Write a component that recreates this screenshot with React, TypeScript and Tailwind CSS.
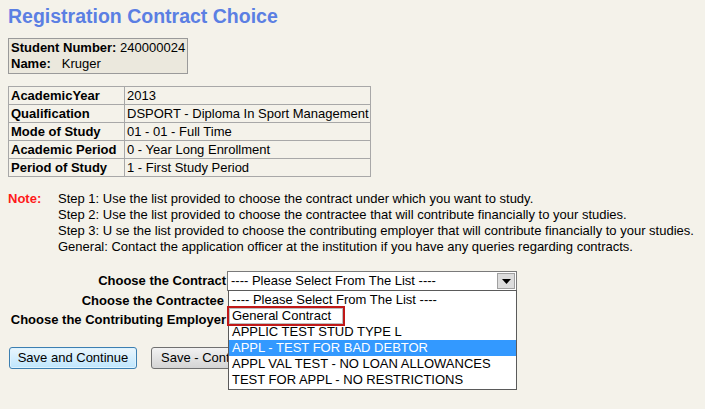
const rows = [
  ["AcademicYear", "2013"],
  ["Qualification", "DSPORT - Diploma In Sport Management"],
  ["Mode of Study", "01 - 01 - Full Time"],
  ["Academic Period", "0 - Year Long Enrollment"],
  ["Period of Study", "1 - First Study Period"],
];

const steps = [
  "Step 1: Use the list provided to choose the contract under which you want to study.",
  "Step 2: Use the list provided to choose the contractee that will contribute financially to your studies.",
  "Step 3: U se the list provided to choose the contributing employer that will contribute financially to your studies.",
  "General: Contact the application officer at the institution if you have any queries regarding contracts.",
];

const options = [
  "---- Please Select From The List ----",
  "General Contract",
  "APPLIC TEST STUD TYPE L",
  "APPL - TEST FOR BAD DEBTOR",
  "APPL VAL TEST - NO LOAN ALLOWANCES",
  "TEST FOR APPL - NO RESTRICTIONS",
];

const SelectBox = ({ open }: { open?: boolean }) => {
  return (
    <div className="relative w-[290px] h-[20px] border border-[#7a7a7a] bg-white flex items-center">
      <span className="pl-[3px] leading-[16px]">---- Please Select From The List ----</span>
      <div className="absolute right-px top-px w-[18px] h-[16px] bg-[#dcdcdc] border border-[#a0a0a0] flex items-center justify-center">
        <svg width="9" height="5" viewBox="0 0 9 5">
          <path d="M0 0 H9 L4.5 5 Z" fill="#000" />
        </svg>
      </div>

      {open && (
        <div className="absolute left-0 top-[18px] w-[289px] border border-[#5a5a5a] bg-white py-px z-10">
          {options.map((opt, i) => (
            <div
              key={opt}
              className={
                i === 3
                  ? "h-[16px] leading-[16px] pl-[3px] bg-[#3399ff] text-white"
                  : "h-[16px] leading-[16px] pl-[3px]"
              }
            >
              {opt}
            </div>
          ))}
          {/* highlight marker round General Contract */}
          <div className="absolute left-[-2px] top-[15px] w-[118px] h-[20px] border-2 border-[#c01818] shadow-[inset_0_0_0_1px_#bdbdbd]" />
        </div>
      )}
    </div>
  );
};

const App = () => {
  return (
    <div className="w-[705px] h-[409px] overflow-hidden bg-[#f4f2ea] text-[13px] text-black pl-2 font-['Liberation_Sans',Arial,sans-serif]">

      <h1 className="pt-[5px] text-[19.5px] leading-[22px] font-bold text-[#5b7fe3]">Registration Contract Choice</h1>

      <div className="mt-[11px] inline-block border border-[#9a9a9a] bg-[#ebe8dd] px-[2px] py-px leading-[16px]">
        <div><b>Student Number:</b> 240000024</div>
        <div><b>Name:</b><span className="ml-[11px]">Kruger</span></div>
      </div>

      <table className="mt-[12px] border-collapse border border-[#a8a8a8] table-fixed w-[363px]">
        <tbody>
          {rows.map((row) => (
            <tr key={row[0]}>
              <td className="w-[116px] h-[18px] border border-[#a8a8a8] px-[2px] py-0 leading-[16px] font-bold whitespace-nowrap">{row[0]}</td>
              <td className="h-[18px] border border-[#a8a8a8] px-[2px] py-0 leading-[16px] whitespace-nowrap">{row[1]}</td>
            </tr>
          ))}
        </tbody>
      </table>

      <div className="mt-[14px] flex leading-[16px]">
        <div className="w-[50px] font-bold text-[#ff1a1a]">Note:</div>
        <div>
          {steps.map((s) => (
            <div key={s} className="whitespace-nowrap">{s}</div>
          ))}
        </div>
      </div>

      <div className="mt-[16px] grid grid-cols-[218px_auto] gap-x-px items-center w-fit font-bold">
        <div className="text-right h-[20px] leading-[20px]">Choose the Contract</div>
        <div className="font-normal"><SelectBox open /></div>
        <div className="text-right h-[19px] leading-[19px] pr-[2px]">Choose the Contractee</div>
        <div className="font-normal h-[19px]" />
        <div className="text-right h-[20px] leading-[20px] whitespace-nowrap">Choose the Contributing Employer</div>
        <div className="font-normal h-[20px]" />
      </div>

      <div className="mt-[17px] flex gap-[14px] pl-px">
        <button className="w-[128px] h-[22px] rounded-[3px] border border-[#3c7fb1] bg-gradient-to-b from-[#eaf6fd] to-[#bee6fd] text-[13px] text-black shadow-[inset_0_0_0_1px_#dff3fd]">
          Save and Continue
        </button>
        <button className="w-[80px] overflow-hidden whitespace-nowrap text-left pl-[9px] h-[22px] rounded-[3px] border border-[#707070] bg-gradient-to-b from-[#f2f2f2] to-[#d4d4d4] text-[13px] text-black">
          Save - Cont
        </button>
      </div>
    </div>
  );
};

export default App;
